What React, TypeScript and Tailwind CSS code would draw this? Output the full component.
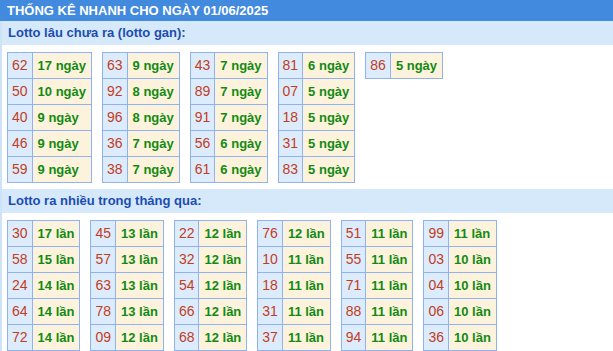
import React from 'react';

type Entry = [string, string];

const gan: Entry[][] = [
  [['62', '17 ngày'], ['50', '10 ngày'], ['40', '9 ngày'], ['46', '9 ngày'], ['59', '9 ngày']],
  [['63', '9 ngày'], ['92', '8 ngày'], ['96', '8 ngày'], ['36', '7 ngày'], ['38', '7 ngày']],
  [['43', '7 ngày'], ['89', '7 ngày'], ['91', '7 ngày'], ['56', '6 ngày'], ['61', '6 ngày']],
  [['81', '6 ngày'], ['07', '5 ngày'], ['18', '5 ngày'], ['31', '5 ngày'], ['83', '5 ngày']],
  [['86', '5 ngày']],
];

const nhieu: Entry[][] = [
  [['30', '17 lần'], ['58', '15 lần'], ['24', '14 lần'], ['64', '14 lần'], ['72', '14 lần']],
  [['45', '13 lần'], ['57', '13 lần'], ['63', '13 lần'], ['78', '13 lần'], ['09', '12 lần']],
  [['22', '12 lần'], ['32', '12 lần'], ['54', '12 lần'], ['66', '12 lần'], ['68', '12 lần']],
  [['76', '12 lần'], ['10', '11 lần'], ['18', '11 lần'], ['31', '11 lần'], ['37', '11 lần']],
  [['51', '11 lần'], ['55', '11 lần'], ['71', '11 lần'], ['88', '11 lần'], ['94', '11 lần']],
  [['99', '11 lần'], ['03', '10 lần'], ['04', '10 lần'], ['06', '10 lần'], ['36', '10 lần']],
];

const StatTable: React.FC<{ rows: Entry[] }> = ({ rows }) => (
  <table className="border-collapse">
    <tbody>
      {rows.map(([num, count]) => (
        <tr key={num} className="h-[26px]">
          <td className="border border-[#8fb3f0] bg-[#dcecfd] px-[4px] text-center text-[14px] text-[#c23d1c]">{num}</td>
          <td className="border border-[#8fb3f0] bg-[#fdf3dd] px-[5px] text-[13px] font-bold text-[#128a12] whitespace-nowrap">{count}</td>
        </tr>
      ))}
    </tbody>
  </table>
);

const Section: React.FC<{ title: string; tables: Entry[][] }> = ({ title, tables }) => (
  <div>
    <div className="h-[24px] bg-[#d6e9fa] pl-[6px] flex items-center text-[13px] font-bold text-[#1c4db3]">{title}</div>
    <div className="flex items-start gap-[10px] pl-[5px] pt-[7px] pb-[6px]">
      {tables.map((t, i) => (
        <StatTable key={i} rows={t} />
      ))}
    </div>
  </div>
);

export default function App() {
  return (
    <div className="w-[613px] h-[351px] overflow-hidden bg-white" style={{ fontFamily: '"Liberation Sans", Arial, sans-serif' }}>
      <div className="h-[21px] bg-[#428ade] pl-[7px] flex items-center text-[13px] font-bold text-white">
        THỐNG KÊ NHANH CHO NGÀY 01/06/2025
      </div>
      <div className="border-l-2 border-[#cfe3f8]">
        <Section title="Lotto lâu chưa ra (lotto gan):" tables={gan} />
        <Section title="Lotto ra nhiều trong tháng qua:" tables={nhieu} />
      </div>
    </div>
  );
}
